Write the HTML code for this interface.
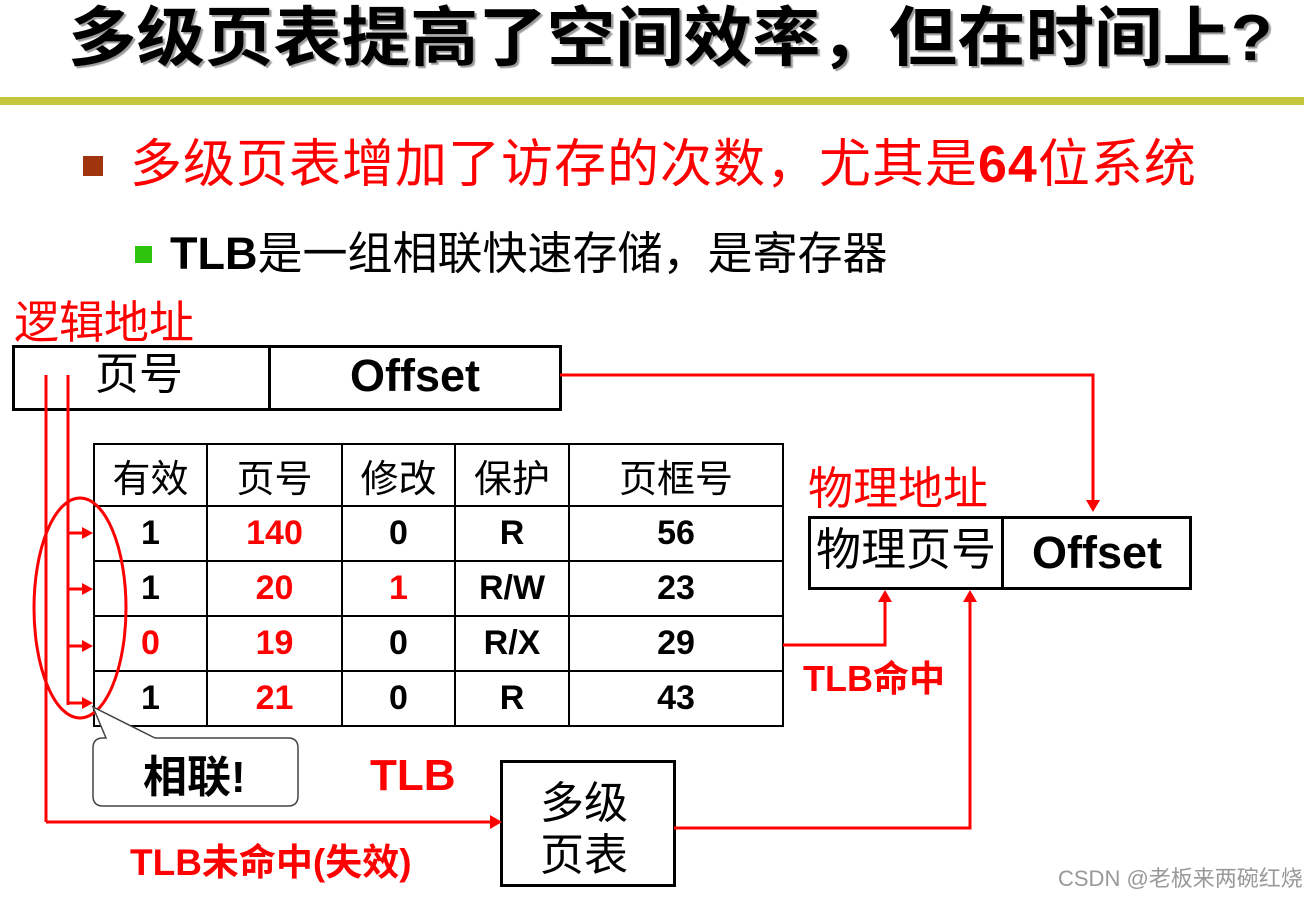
<!DOCTYPE html>
<html><head><meta charset="utf-8"><style>
body{margin:0;width:1304px;height:898px;background:#fff;position:relative;overflow:hidden;font-family:"Liberation Sans","Noto Sans CJK SC",sans-serif}
.a{position:absolute;white-space:nowrap;line-height:1}
.r{color:#f00}
table{position:absolute;left:93px;top:443px;border-collapse:collapse}
td{border:2px solid #000;text-align:center;font-size:34px;font-weight:bold;padding:0;height:53px}
td.h{font-weight:normal;font-size:38px;height:60px}
</style></head><body>
<div class="a" style="left:68px;top:6px;font-size:60px;font-weight:bold;transform:scale(1.14,1.08);transform-origin:top left;text-shadow:2px 2px 1px #999">多级页表提高了空间效率，但在时间上?</div>
<div class="a" style="left:0;top:97px;width:1304px;height:8px;background:#c4c63e"></div>
<div class="a" style="left:83px;top:156px;width:20px;height:20px;background:#a0340e"></div>
<div class="a r" style="left:130px;top:139px;font-size:52px;letter-spacing:1px">多级页表增加了访存的次数，尤其是<b>64</b>位系统</div>
<div class="a" style="left:135px;top:246px;width:17px;height:17px;background:#2ec40e"></div>
<div class="a" style="left:170px;top:231px;font-size:45px"><b>TLB</b>是一组相联快速存储，是寄存器</div>
<div class="a r" style="left:14px;top:300px;font-size:45px">逻辑地址</div>
<div class="a" style="left:12px;top:345px;width:544px;height:60px;border:3px solid #000;box-sizing:content-box"></div>
<div class="a" style="left:268px;top:345px;width:3px;height:64px;background:#000"></div>
<div class="a" style="left:95px;top:353px;font-size:44px">页号</div>
<div class="a" style="left:350px;top:353px;font-size:45px;font-weight:bold">Offset</div>
<table>
<tr><td class="h" style="width:111px">有效</td><td class="h" style="width:133px">页号</td><td class="h" style="width:111px">修改</td><td class="h" style="width:112px">保护</td><td class="h" style="width:212px">页框号</td></tr>
<tr><td>1</td><td class="r">140</td><td>0</td><td>R</td><td>56</td></tr>
<tr><td>1</td><td class="r">20</td><td class="r">1</td><td>R/W</td><td>23</td></tr>
<tr><td class="r">0</td><td class="r">19</td><td>0</td><td>R/X</td><td>29</td></tr>
<tr><td>1</td><td class="r">21</td><td>0</td><td>R</td><td>43</td></tr>
</table>
<div class="a r" style="left:808px;top:466px;font-size:45px">物理地址</div>
<div class="a" style="left:808px;top:516px;width:378px;height:68px;border:3px solid #000"></div>
<div class="a" style="left:1001px;top:516px;width:3px;height:74px;background:#000"></div>
<div class="a" style="left:816px;top:527px;font-size:45px">物理页号</div>
<div class="a" style="left:1032px;top:530px;font-size:45px;font-weight:bold">Offset</div>
<div class="a r" style="left:803px;top:661px;font-size:36px;font-weight:bold">TLB命中</div>
<div class="a r" style="left:370px;top:754px;font-size:44px;font-weight:bold">TLB</div>
<div class="a r" style="left:130px;top:844px;font-size:37px;font-weight:bold">TLB未命中(失效)</div>
<div class="a" style="left:500px;top:760px;width:170px;height:121px;border:3px solid #000"></div>
<div class="a" style="left:540px;top:778px;font-size:44px;line-height:52px;white-space:normal;width:100px">多级<br>页表</div>
<div class="a" style="left:1058px;top:868px;font-size:22px;color:#999">CSDN @老板来两碗红烧</div>
<svg class="a" style="left:0;top:0" width="1304" height="898">
<g stroke="#f00" stroke-width="3" fill="none">
<polyline points="560,375 1093,375 1093,500"/>
<line x1="46" y1="375" x2="46" y2="822"/><line x1="46" y1="822" x2="492" y2="822"/>
<line x1="68" y1="375" x2="68" y2="705"/>
<line x1="68" y1="533" x2="84" y2="533"/><line x1="68" y1="589" x2="84" y2="589"/><line x1="68" y1="646" x2="84" y2="646"/><line x1="68" y1="703" x2="84" y2="703"/>
<polyline points="674,828 970,828 970,600"/>
<polyline points="783,645 885,645 885,600"/>
<ellipse cx="80" cy="608" rx="46" ry="110"/>
</g>
<g fill="#f00">
<polygon points="1086,500 1100,500 1093,512"/>
<polygon points="490,815 502,822 490,829"/>
<polygon points="82,527 93,533 82,539"/><polygon points="82,583 93,589 82,595"/><polygon points="82,640 93,646 82,652"/><polygon points="82,697 93,703 82,709"/>
<polygon points="963,602 977,602 970,590"/><polygon points="878,602 892,602 885,590"/>
</g>
<path d="M106,738 L93,707 L155,738 L288,738 Q298,738 298,748 L298,796 Q298,806 288,806 L103,806 Q93,806 93,796 L93,748 Q93,738 103,738 Z" fill="#fff" stroke="#444" stroke-width="1.5"/>
<text x="143" y="792" font-size="44" font-weight="bold" font-family="Liberation Sans,Noto Sans CJK SC,sans-serif">相联!</text>
</svg>
</body></html>
